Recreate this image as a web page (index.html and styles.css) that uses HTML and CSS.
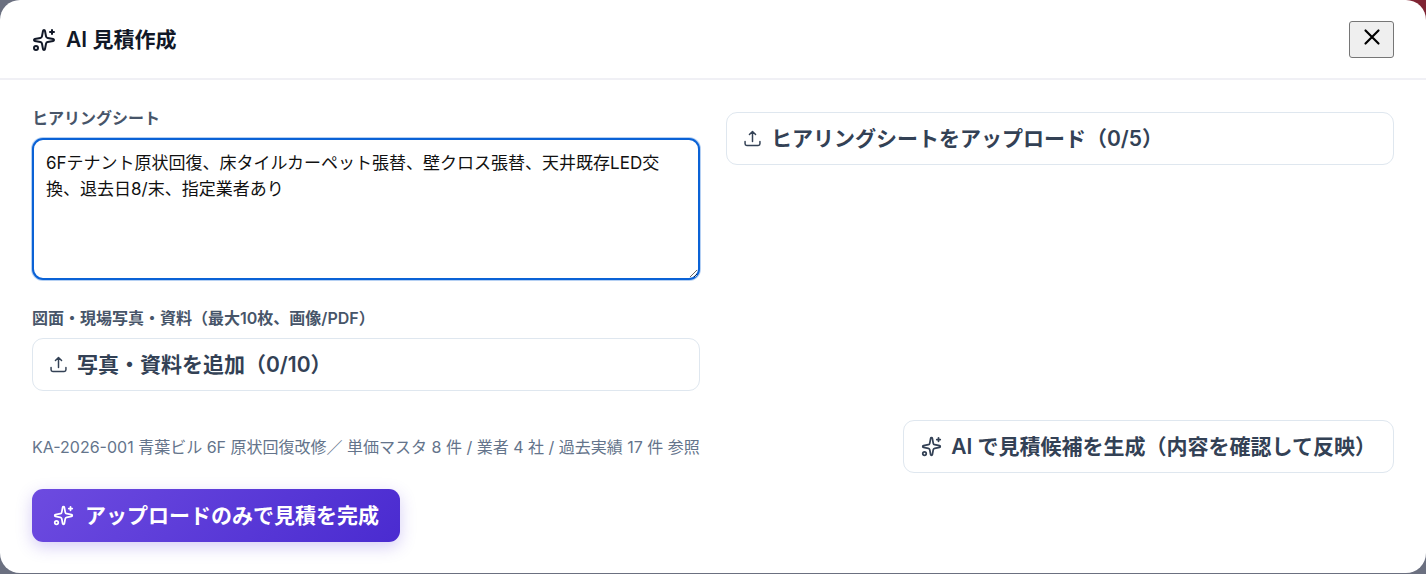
FILE: index.html
```html
<!DOCTYPE html>
<html lang="ja">
<head>
    <meta charset="UTF-8">
    <meta name="viewport" content="width=device-width, initial-scale=1.0">
    <title>AI 見積作成</title>
    <link rel="stylesheet" href="styles.css">
</head>
<body>
    <svg class="sprite" aria-hidden="true">
        <symbol id="icon-sparkles" viewBox="0 0 24 24">
            <path d="M11.017 2.814a1 1 0 0 1 1.966 0l1.051 5.558a2 2 0 0 0 1.594 1.594l5.558 1.051a1 1 0 0 1 0 1.966l-5.558 1.051a2 2 0 0 0-1.594 1.594l-1.051 5.558a1 1 0 0 1-1.966 0l-1.051-5.558a2 2 0 0 0-1.594-1.594l-5.558-1.051a1 1 0 0 1 0-1.966l5.558-1.051a2 2 0 0 0 1.594-1.594z"/>
            <path d="M20 2v4M22 4h-4"/>
            <circle cx="4" cy="20" r="2"/>
        </symbol>
        <symbol id="icon-upload" viewBox="0 0 24 24">
            <path d="M12 15.5V4M8.5 7.5 12 4l3.500 3.500M3.500 15.500v2.500a2 2 0 0 0 2 2h13a2 2 0 0 0 2-2v-2.500"/>
        </symbol>
        <symbol id="icon-close" viewBox="0 0 24 24">
            <path d="M18 6 6 18M6 6l12 12"/>
        </symbol>
    </svg>

    <main class="modal" role="dialog" aria-labelledby="modal-title">
        <header class="modal-header">
            <h1 id="modal-title" class="modal-title">
                <svg class="icon icon-title"><use href="#icon-sparkles"/></svg>
                AI 見積作成
            </h1>
            <button type="button" class="close-button" aria-label="閉じる">
                <svg class="icon icon-close"><use href="#icon-close"/></svg>
            </button>
        </header>

        <div class="modal-body">
            <div class="form-grid">
                <div class="column">
                    <div class="field">
                        <label class="label" for="hearing">ヒアリングシート</label>
                        <textarea id="hearing" class="textarea">6Fテナント原状回復、床タイルカーペット張替、壁クロス張替、天井既存LED交換、退去日8/末、指定業者あり</textarea>
                    </div>
                    <div class="field">
                        <label class="label" for="add-files">図面・現場写真・資料（最大10枚、画像/PDF）</label>
                        <button type="button" id="add-files" class="button button-upload">
                            <svg class="icon icon-upload"><use href="#icon-upload"/></svg>
                            <span class="button-text">写真・資料を追加（0/10）</span>
                        </button>
                    </div>
                </div>
                <div class="column">
                    <button type="button" class="button button-upload">
                        <svg class="icon icon-upload"><use href="#icon-upload"/></svg>
                        <span class="button-text">ヒアリングシートをアップロード（0/5）</span>
                    </button>
                </div>
            </div>

            <div class="actions">
                <p class="note">KA-2026-001 青葉ビル 6F 原状回復改修／ 単価マスタ 8 件 / 業者 4 社 / 過去実績 17 件 参照</p>
                <button type="button" class="button">
                    <svg class="icon"><use href="#icon-sparkles"/></svg>
                    <span class="button-text">AI で見積候補を生成（内容を確認して反映）</span>
                </button>
            </div>
            <button type="button" class="button button-primary">
                <svg class="icon"><use href="#icon-sparkles"/></svg>
                <span class="button-text">アップロードのみで見積を完成</span>
            </button>
        </div>
    </main>
</body>
</html>
```

FILE: styles.css
```css
* {
    box-sizing: border-box;
}

body {
    margin: 0;
    min-height: 100vh;
    font-family: Inter, "Noto Sans CJK JP", sans-serif;
    color: #111827;
    background: linear-gradient(to right, #6b7080 98%, #7f2433 98%) top / 100% 40px no-repeat #6b7080;
}

.sprite {
    display: none;
}

.icon {
    width: 21px;
    height: 21px;
    flex-shrink: 0;
    fill: none;
    stroke: currentColor;
    stroke-width: 2;
    stroke-linecap: round;
    stroke-linejoin: round;
}

.icon-title {
    width: 24px;
    height: 24px;
}

.icon-upload {
    stroke-width: 1.7;
}

.icon-close {
    width: 26px;
    height: 26px;
}

.modal {
    background: #fff;
    border-radius: 20px;
}

.modal-header {
    display: flex;
    align-items: center;
    justify-content: space-between;
    height: 80px;
    padding: 0 32px;
    border-bottom: 2px solid #f0f0f5;
}

.modal-title {
    display: flex;
    align-items: center;
    gap: 10px;
    margin: 0;
    padding-top: 2px;
    font-size: 21px;
    font-weight: 600;
    line-height: 32px;
}

.close-button {
    display: flex;
    justify-content: center;
    width: 45px;
    height: 37px;
    padding: 2px 0;
    color: #000;
    background: #efefef;
    border: 1px solid #767676;
    border-radius: 3px;
}

.modal-body {
    padding: 32px 32px 31px;
}

.form-grid {
    display: grid;
    grid-template-columns: 1fr 1fr;
    gap: 26px;
    margin-bottom: 29px;
}

.column {
    display: flex;
    flex-direction: column;
    gap: 32px;
}

.field {
    display: flex;
    flex-direction: column;
    gap: 14px;
}

.label {
    font-size: 16px;
    font-weight: 600;
    line-height: 12px;
    color: #475569;
}

.textarea {
    height: 142px;
    padding: 10px 12px;
    font-family: inherit;
    font-size: 17px;
    line-height: 26px;
    color: #111;
    background: #fff;
    border: 2px solid #0a62d6;
    border-radius: 11px;
    outline: none;
    box-shadow: 0 0 0 1px rgba(10, 98, 214, 0.3);
    resize: vertical;
}

.button {
    display: flex;
    align-items: center;
    gap: 9px;
    height: 53px;
    padding: 0 17px;
    font-family: inherit;
    font-size: 21px;
    font-weight: 600;
    color: #334155;
    white-space: nowrap;
    background: #fff;
    border: 1px solid #dfe7ef;
    border-radius: 11px;
}

.button-text {
    padding-bottom: 3px;
}

.button-upload {
    gap: 8px;
    padding: 0 15px;
}

.actions {
    display: flex;
    align-items: center;
    justify-content: space-between;
    gap: 16px;
    margin-bottom: 16px;
}

.note {
    margin: 0;
    padding-bottom: 2px;
    font-size: 16px;
    color: #64748b;
}

.button-primary {
    gap: 11px;
    padding: 0 21px;
    color: #fff;
    background: linear-gradient(135deg, #6d4be0, #4a2bd0);
    border: none;
    box-shadow: 0 5px 16px rgba(91, 60, 220, 0.25);
}
```
